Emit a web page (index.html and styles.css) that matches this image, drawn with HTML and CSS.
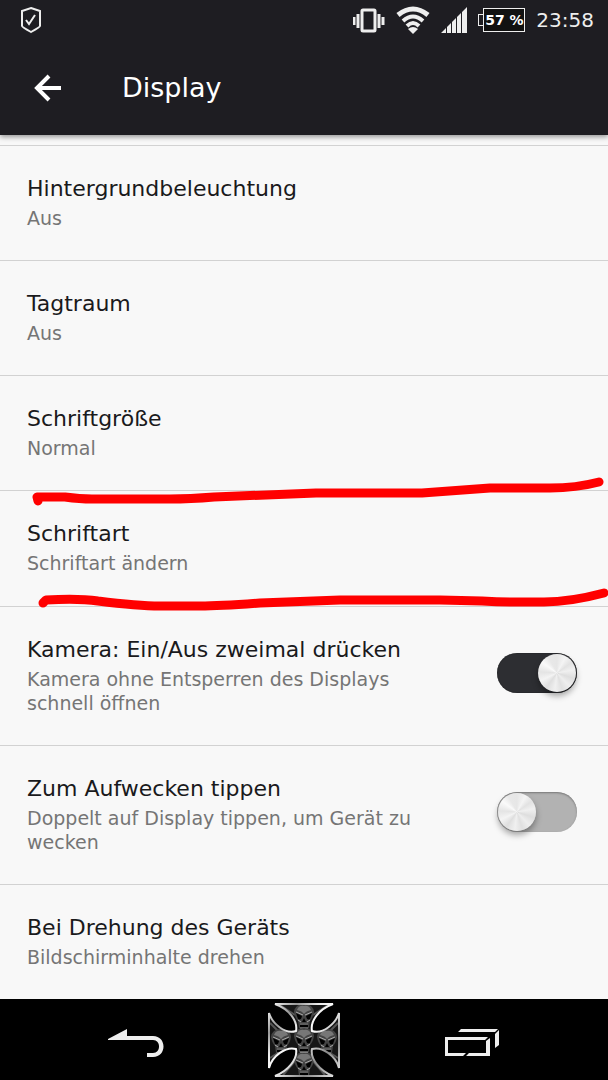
FILE: index.html
```html
<!DOCTYPE html>
<html lang="de">
<head>
    <meta charset="UTF-8">
    <meta name="viewport" content="width=device-width, initial-scale=1.0">
    <title>Display</title>
    <link rel="stylesheet" href="styles.css">
</head>
<body>
    <header class="top">
        <div class="status-bar">
            <svg class="shield" width="22" height="28" viewBox="0 0 22 28" fill="none" stroke="#eee" stroke-width="2">
                <path d="M11 2 L20 5 V20 Q20 21 11 26 Q2 21 2 20 V5 Z"/>
                <path d="M6 14 L9 18 L15 9"/>
            </svg>
            <div class="status-icons">
                <svg width="32" height="26" viewBox="0 0 32 26" fill="none" stroke="#eee">
                    <rect x="9" y="3" width="13" height="21" rx="1" stroke-width="3"/>
                    <path d="M1 10 V18 M5 7 V21 M26 7 V21 M30 10 V18" stroke-width="3"/>
                </svg>
                <svg width="34" height="28" viewBox="0 0 34 28" fill="none" stroke="#eee" stroke-width="5">
                    <path d="M2 9 Q17 -3 32 9"/>
                    <path d="M7 15 Q17 6 27 15" stroke-width="4"/>
                    <path d="M11 20 Q17 14 23 20" stroke-width="4"/>
                    <path d="M17 28 L12 23 Q17 19 22 23 Z" fill="#eee" stroke="none"/>
                </svg>
                <svg width="26" height="26" viewBox="0 0 26 26" fill="#eee">
                    <path d="M0 26 L5 21 V26 Z M6 20 L10 16 V26 H6 Z M11 15 L15 11 V26 H11 Z M16 10 L20 6 V26 H16 Z M21 5 L26 0 V26 H21 Z"/>
                </svg>
                <div class="battery"><span class="battery-tip"></span><span class="battery-body">57 %</span></div>
                <span class="clock">23:58</span>
            </div>
        </div>
        <div class="toolbar">
            <button class="back" aria-label="Zurück">
                <svg width="28" height="28" viewBox="0 0 28 28" fill="none" stroke="#fff" stroke-width="4">
                    <path d="M27 14 H3 M15 2 L3 14 L15 26"/>
                </svg>
            </button>
            <h1>Display</h1>
        </div>
    </header>

    <main class="settings">
        <section class="row">
            <div class="text">
                <h2>Hintergrundbeleuchtung</h2>
                <p>Aus</p>
            </div>
        </section>
        <section class="row">
            <div class="text">
                <h2>Tagtraum</h2>
                <p>Aus</p>
            </div>
        </section>
        <section class="row">
            <div class="text">
                <h2>Schriftgröße</h2>
                <p>Normal</p>
            </div>
        </section>
        <section class="row marked">
            <div class="text">
                <h2>Schriftart</h2>
                <p>Schriftart ändern</p>
            </div>
            <!-- red pen strokes above and below the entry -->
            <svg class="marks" viewBox="0 0 608 140" preserveAspectRatio="none" fill="none" stroke="#f00" stroke-width="9" stroke-linecap="round" stroke-linejoin="round">
                <path d="M38 24 L37 20 H65 Q80 22 92 22 H170 Q190 22 214 20 L316 16 H422 L490 11 H550 Q576 11 599 5"/>
                <path d="M43 126 L46 123 Q78 121 98 124 Q138 129 160 129 H200 Q220 129 260 126 L340 123 H440 L482 124 Q500 125 515 125 H544 Q570 125 604 116"/>
            </svg>
        </section>
        <section class="row">
            <label class="text" for="camera">
                <h2>Kamera: Ein/Aus zweimal drücken</h2>
                <p>Kamera ohne Entsperren des Displays schnell öffnen</p>
            </label>
            <input class="switch" type="checkbox" id="camera" checked>
        </section>
        <section class="row">
            <label class="text" for="wake">
                <h2>Zum Aufwecken tippen</h2>
                <p>Doppelt auf Display tippen, um Gerät zu wecken</p>
            </label>
            <input class="switch" type="checkbox" id="wake">
        </section>
        <section class="row">
            <div class="text">
                <h2>Bei Drehung des Geräts</h2>
                <p>Bildschirminhalte drehen</p>
            </div>
        </section>
    </main>

    <nav class="nav-bar">
        <button aria-label="Zurück">
            <svg class="line-icon" width="56" height="30" viewBox="0 0 56 30">
                <path d="M0 11 L19 1 V8 H45 C59 8 59 29 45 29 H39 V25 H45 C53 25 53 12 45 12 H0 Z" fill="#eee"/>
            </svg>
        </button>
        <button aria-label="Startseite">
            <svg width="72" height="74" viewBox="0 0 72 74">
                <defs>
                    <linearGradient id="metal" x1="0" y1="0" x2="1" y2="1">
                        <stop offset="0" stop-color="#fff"/>
                        <stop offset=".2" stop-color="#999"/>
                        <stop offset=".35" stop-color="#eee"/>
                        <stop offset=".5" stop-color="#fff"/>
                        <stop offset=".75" stop-color="#888"/>
                        <stop offset="1" stop-color="#eee"/>
                    </linearGradient>
                    <g id="skull">
                        <path d="M-10 -6 Q-9 -14 0 -14 Q9 -14 10 -6 Q9 0 6 3 L5 10 Q0 13 -5 10 L-6 3 Q-9 0 -10 -6 Z" fill="#444"/>
                        <path d="M-7 -8 Q-5 -13 0 -12 Q5 -13 7 -8 Q2 -7 0 -4 Q-2 -7 -7 -8 Z" fill="#777"/>
                        <path d="M-8 -5 L-2 -2 Q-3 3 -6 1 Z M8 -5 L2 -2 Q3 3 6 1 Z M0 0 L2 4 H-2 Z" fill="#000"/>
                        <path d="M-8 -6 L-1 -3 M8 -6 L1 -3 M-6 2 L-3 4 M6 2 L3 4" stroke="#aaa" fill="none"/>
                        <path d="M-4 5 H4 V10 H-4 Z" fill="#000"/>
                        <path d="M-3 5 V7 M-1 5 V7 M1 5 V7 M3 5 V7 M-3 9 V11 M-1 9 V11 M1 9 V11 M3 9 V11" stroke="#bbb" fill="none"/>
                    </g>
                    <clipPath id="cross">
                        <path d="M7 1 H65 C51 6 42 18 44 28 C55 32 68 20 71 10 V65 C68 53 54 43 44 46 C42 56 52 68 65 73 H7 C20 68 30 56 28 46 C18 43 4 53 1 65 V10 C4 20 17 32 28 28 C30 18 21 6 7 1 Z"/>
                    </clipPath>
                </defs>
                <g clip-path="url(#cross)">
                    <rect width="72" height="74" fill="#161616"/>
                    <path d="M12 2 L27 12 M60 2 L45 12 M2 20 L16 34 M70 20 L56 34 M2 55 L16 46 M70 55 L56 46 M15 72 L27 58 M57 72 L45 58" stroke="#555" stroke-width="2"/>
                    <use href="#skull" x="36" y="15"/>
                    <use href="#skull" x="13" y="40"/>
                    <use href="#skull" x="59" y="40"/>
                    <use href="#skull" x="36" y="63"/>
                    <use href="#skull" x="36" y="39"/>
                </g>
                <path d="M7 1 H65 C51 6 42 18 44 28 C55 32 68 20 71 10 V65 C68 53 54 43 44 46 C42 56 52 68 65 73 H7 C20 68 30 56 28 46 C18 43 4 53 1 65 V10 C4 20 17 32 28 28 C30 18 21 6 7 1 Z" fill="none" stroke="url(#metal)" stroke-width="2"/>
            </svg>
        </button>
        <button aria-label="Letzte Apps">
            <svg class="line-icon" width="56" height="30" viewBox="0 0 56 30" fill="#eee">
                <path d="M17 1 H54 L51 4 H14 Z M55 2 V17 L51 20 V6 Z"/>
                <path d="M1 9 H44 L41 12 H4 V25 H22 L19 28 H1 Z M46 10 V28 H22 L25 25 H42 V13 Z"/>
            </svg>
        </button>
    </nav>
</body>
</html>
```
FILE: styles.css
```css
* {
    box-sizing: border-box;
}

body {
    margin: 0;
    min-height: 100vh;
    display: flex;
    flex-direction: column;
    background-color: #f8f8f8;
    color: #1a1a1c;
    font-family: "DejaVu Sans", sans-serif;
}

h1, h2, p {
    margin: 0;
    font-weight: normal;
}

button {
    display: flex;
    padding: 0;
    border: none;
    background: none;
}

/* Status bar and title */
.top {
    background-color: #1e1d22;
    color: #fff;
    box-shadow: 0 2px 5px rgba(0, 0, 0, 0.4);
}

.status-bar {
    height: 40px;
    padding: 0 14px 0 20px;
    display: flex;
    align-items: center;
    justify-content: space-between;
}

.status-icons {
    display: flex;
    align-items: center;
    gap: 11px;
    color: #eee;
}

.battery {
    display: flex;
    align-items: center;
}

.battery-tip {
    width: 5px;
    height: 12px;
    border: 1px solid #eee;
    border-right: none;
}

.battery-body {
    width: 42px;
    height: 24px;
    border: 1px solid #eee;
    background-color: #111;
    color: #fff;
    font-size: 14px;
    font-weight: bold;
    line-height: 22px;
    text-align: center;
    white-space: nowrap;
}

.clock {
    font-size: 20px;
    line-height: 24px;
}

.toolbar {
    height: 95px;
    padding: 0 34px;
    display: flex;
    align-items: center;
    gap: 60px;
}

.toolbar h1 {
    font-size: 27px;
    line-height: 32px;
}

/* Settings list */
.settings {
    flex: 1;
    display: flex;
    flex-direction: column;
    padding-top: 10px;
}

.row {
    flex: 1 0 auto;
    display: flex;
    align-items: center;
    justify-content: space-between;
    gap: 48px;
    padding: 28px 31px 30px 27px;
    border-top: 1px solid #d2d2d2;
}

.row h2 {
    margin-bottom: 2px;
    font-size: 22px;
    line-height: 30px;
}

.row p {
    color: #757575;
    font-size: 19px;
    line-height: 24px;
}

.marked {
    position: relative;
}

.marks {
    position: absolute;
    top: -14px;
    left: 0;
    width: 100%;
    height: 140px;
    pointer-events: none;
}

/* Toggle switch */
.switch {
    appearance: none;
    flex: none;
    display: flex;
    width: 80px;
    height: 40px;
    margin: 0 0 4px;
    padding: 1px;
    border-radius: 20px;
    background-color: #b2b2b2;
    box-shadow: inset 0 1px 2px #777;
}

.switch::before {
    content: "";
    width: 38px;
    height: 38px;
    border-radius: 50%;
    background: conic-gradient(#e6e6e6, #f4f4f4 8%, #e2e2e2 15%, #f0f0f0 22%, #dedede 30%, #eee 38%, #e0e0e0 45%, #f0f0f0 52%, #dedede 60%, #f4f4f4 68%, #e4e4e4 76%, #fafafa 85%, #e8e8e8 92%, #e6e6e6);
    box-shadow: 0 4px 6px rgba(0, 0, 0, 0.35);
}

.switch:checked {
    justify-content: flex-end;
    background-color: #2d2e32;
    box-shadow: inset 0 0 1px #000;
}

/* Navigation keys */
.nav-bar {
    height: 81px;
    padding: 0 52px;
    display: grid;
    grid-template-columns: repeat(3, 1fr);
    place-items: center;
    background-color: #000;
}

.line-icon {
    margin-top: 7px;
}
```
